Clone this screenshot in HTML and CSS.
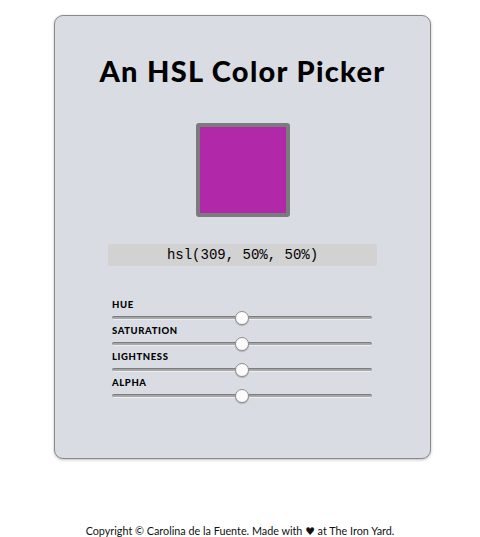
FILE: index.html
```html
<!DOCTYPE html>
<html>
<head>
<meta charset="utf-8">
<link rel="stylesheet" href="styles.css">
</head>
<body>
<main class="card">
  <h1 class="title">An HSL Color Picker</h1>
  <div class="swatch"></div>
  <div class="output">hsl(309, 50%, 50%)</div>
  <div class="controls">
    <label class="ctrl"><span class="ctrl-label">Hue</span><input class="range" type="range" min="0" max="360" value="180"></label>
    <label class="ctrl"><span class="ctrl-label">Saturation</span><input class="range" type="range" min="0" max="100" value="50"></label>
    <label class="ctrl"><span class="ctrl-label">Lightness</span><input class="range" type="range" min="0" max="100" value="50"></label>
    <label class="ctrl"><span class="ctrl-label">Alpha</span><input class="range" type="range" min="0" max="100" value="50"></label>
  </div>
</main>
<footer class="footer">Copyright © Carolina de la Fuente. Made with <span class="heart">♥</span> at The Iron Yard.</footer>
</body>
</html>
```
FILE: styles.css
```css
html, body { margin: 0; padding: 0; background: #fff; }
body { font-family: "Lato", "Liberation Sans", sans-serif; color: #000; }
.card {
  box-sizing: border-box;
  width: 377px;
  height: 444px;
  margin: 15px 0 0 54px;
  background: #d9dde3;
  border: 1px solid #8a8a8a;
  border-radius: 9px;
  box-shadow: 0 1px 3px rgba(0,0,0,0.25);
  display: flex;
  flex-direction: column;
  align-items: center;
}
.title {
  margin: 37px 0 0;
  font-size: 29px;
  font-weight: 900;
  letter-spacing: 1.3px;
  line-height: 36px;
}
.swatch {
  box-sizing: border-box;
  width: 94px;
  height: 94px;
  margin-top: 34px;
  background: #b128a8;
  border: 4px solid #7b7b7d;
  border-radius: 3px;
}
.output {
  box-sizing: border-box;
  width: 269px;
  height: 22px;
  margin-top: 27px;
  background: #d3d2d3;
  border-radius: 2px;
  font-family: "Liberation Mono", monospace;
  font-size: 14px;
  line-height: 22px;
  text-align: center;
  color: #000;
}
.controls {
  width: 261px;
  margin-top: 33px;
  display: flex;
  flex-direction: column;
}
.ctrl { display: flex; flex-direction: column; height: 26px; }
.ctrl-label {
  font-size: 9.5px;
  font-weight: 900;
  text-transform: uppercase;
  letter-spacing: 0.6px;
  line-height: 12px;
}
.range {
  -webkit-appearance: none;
  appearance: none;
  width: 260px;
  height: 14px;
  margin: 0;
  background: transparent;
}
.range::-webkit-slider-runnable-track {
  height: 4px;
  border-radius: 2px;
  background: #a9aaac;
  box-shadow: inset 0 1px 1px rgba(0,0,0,0.3);
  border-bottom: 1px solid #eceef1;
}
.range::-webkit-slider-thumb {
  -webkit-appearance: none;
  width: 14px;
  height: 14px;
  margin-top: -5px;
  border-radius: 50%;
  background: #fbfbfb;
  border: 1px solid #8d8d8d;
  box-shadow: 0 1px 1px rgba(0,0,0,0.2);
}
.footer {
  margin-top: 66px;
  text-align: center;
  font-size: 10.8px;
  line-height: 12px;
  color: #111;
}
.heart { font-family: "DejaVu Sans", sans-serif; }
```
